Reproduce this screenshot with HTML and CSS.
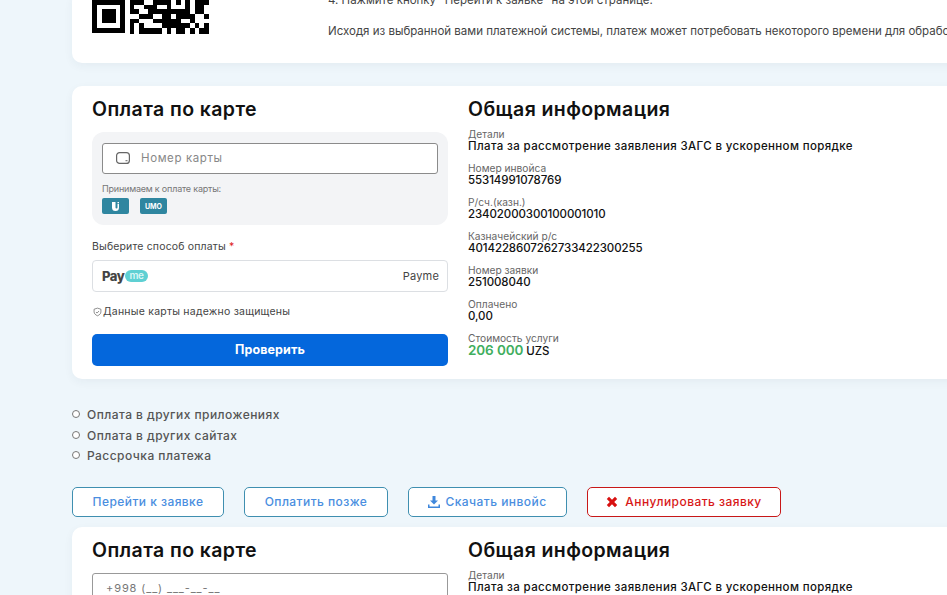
FILE: index.html
```html
<!DOCTYPE html>
<html lang="ru">
<head>
  <meta charset="UTF-8" />
  <meta name="viewport" content="width=device-width, initial-scale=1.0" />
  <title>Оплата</title>
  <link rel="stylesheet" href="styles.css">
</head>
<body>
  <div class="page">
    <div class="card qr-card">
      <svg class="qr" viewBox="0 0 25 7.3" shape-rendering="crispEdges">
        <path fill="#000" d="M0 0h7v7h-7zM1 1v5h5v-5zM2 2h3v3h-3z" fill-rule="evenodd"/>
        <path fill="#000" d="M8 0h3v1h-3zM13 0h3v1h-3zM16 0h1v1h-1zM18 0h1v1h-1zM20 0h1v1h-1zM22 0h3v1h-3zM8 1h1v1h-1zM11 1h3v1h-3zM16 1h1v1h-1zM20 1h1v1h-1zM22 1h2v1h-2zM8 2h2v1h-2zM12 2h4v1h-4zM16 2h5v1h-5zM22 2h2v1h-2zM10 3h3v1h-3zM15 3h2v1h-2zM18 3h4v1h-4zM24 3h1v1h-1zM8 4h2v1h-2zM13 4h6v1h-6zM21 4h1v1h-1zM8 5h1v1h-1zM10 5h1v1h-1zM15 5h6v1h-6zM22 5h1v1h-1zM24 5h1v1h-1zM8 6h1v1.3h-1zM10 6h5v1.3h-5zM16 6h1v1.3h-1zM18 6h2v1.3h-2zM21 6h1v1.3h-1zM23 6h2v1.3h-2z"/>
      </svg>
      <div class="steps">
        <p>4. Нажмите кнопку "Перейти к заявке" на этой странице.</p>
        <p>Исходя из выбранной вами платежной системы, платеж может потребовать некоторого времени для обработки.</p>
      </div>
    </div>

    <div class="card pay-card">
      <div class="pay-col">
        <h2 class="card-title">Оплата по карте</h2>
        <div class="card-panel">
          <div class="card-input">
            <svg class="card-icon" viewBox="0 0 14 12"><rect x="0.6" y="0.6" width="12.8" height="10.8" rx="3" fill="none" stroke="#666" stroke-width="1.2"/><rect x="9.5" y="8.2" width="2" height="1" fill="#666"/></svg>
            <span>Номер карты</span>
          </div>
          <div class="accept-text">Принимаем к оплате карты:</div>
          <div class="badges">
            <span class="badge">
              <svg viewBox="0 0 10 11" width="10" height="11"><path d="M1 1h3.500v5.500a1 1 0 0 0 2 0v-3.500h1.500v3.500a3.500 3.500 0 0 1-7 0z" fill="#fff"/><rect x="6.500" y="1" width="1.500" height="1.300" fill="#fff"/></svg>
            </span>
            <span class="badge badge-text">UMO</span>
          </div>
        </div>
        <div class="field-label">Выберите способ оплаты <span class="req">*</span></div>
        <div class="select">
          <span class="payme-logo">Pay<span class="payme-me">me</span></span>
          <span class="select-name">Payme</span>
        </div>
        <div class="secure">
          <svg viewBox="0 0 10 10" width="9" height="10"><path d="M5 .7l3.8 1.2v3c0 2-1.700 3.400-3.800 4.300-2.100-.9-3.800-2.300-3.800-4.300v-3z" fill="none" stroke="#666" stroke-width=".8"/><path d="M3.300 5l1.200 1.200 2.200-2.300" fill="none" stroke="#666" stroke-width=".8"/></svg>
          Данные карты надежно защищены
        </div>
        <button class="check-button">Проверить</button>
      </div>
      <div class="info-col">
        <h2 class="card-title">Общая информация</h2>
        <div class="info-item"><div class="info-label">Детали</div><div class="info-value">Плата за рассмотрение заявления ЗАГС в ускоренном порядке</div></div>
        <div class="info-item"><div class="info-label">Номер инвойса</div><div class="info-value info-number">55314991078769</div></div>
        <div class="info-item"><div class="info-label">Р/сч.(казн.)</div><div class="info-value info-number">23402000300100001010</div></div>
        <div class="info-item"><div class="info-label">Казначейский р/с</div><div class="info-value info-number">4014228607262733422300255</div></div>
        <div class="info-item"><div class="info-label">Номер заявки</div><div class="info-value info-number">251008040</div></div>
        <div class="info-item"><div class="info-label">Оплачено</div><div class="info-value info-number">0,00</div></div>
        <div class="info-item"><div class="info-label">Стоимость услуги</div><div class="info-value info-number"><span class="price">206 000</span> UZS</div></div>
      </div>
    </div>

    <div class="radios">
      <label class="radio"><span class="radio-dot"></span>Оплата в других приложениях</label>
      <label class="radio"><span class="radio-dot"></span>Оплата в других сайтах</label>
      <label class="radio"><span class="radio-dot"></span>Рассрочка платежа</label>
    </div>

    <div class="actions">
      <button class="action-button btn-go">Перейти к заявке</button>
      <button class="action-button btn-later">Оплатить позже</button>
      <button class="action-button btn-invoice">
        <svg viewBox="0 0 12 12" width="12" height="12"><path d="M4.500 0h3v4.500h2.500l-4 4-4-4h2.500z" fill="#3f87dc"/><path d="M0 8.500h1.500v2h9v-2h1.500v3.500h-12z" fill="#3f87dc"/></svg>
        Скачать инвойс
      </button>
      <button class="action-button btn-cancel">
        <svg viewBox="0 0 12 12" width="12" height="12"><path d="M.8 3l2.200-2.200 3 3 3-3 2.200 2.200-3 3 3 3-2.200 2.200-3-3-3 3-2.200-2.200 3-3z" fill="#d81010"/></svg>
        Аннулировать заявку
      </button>
    </div>

    <div class="card pay-card">
      <div class="pay-col">
        <h2 class="card-title">Оплата по карте</h2>
        <div class="phone-input">+998 (__) ___-__-__</div>
      </div>
      <div class="info-col">
        <h2 class="card-title">Общая информация</h2>
        <div class="info-item"><div class="info-label">Детали</div><div class="info-value">Плата за рассмотрение заявления ЗАГС в ускоренном порядке</div></div>
      </div>
    </div>
  </div>
</body>
</html>
```

FILE: styles.css
```css
* {
  margin: 0;
  padding: 0;
  box-sizing: border-box;
}

html, body {
  height: 100%;
  overflow: hidden;
}

body {
  font-family: Inter, "Noto Sans", sans-serif;
  background: #eef6fb;
  color: #111;
}

.page {
  width: 1120px;
  padding-left: 72px;
  display: flex;
  flex-direction: column;
}

.card {
  background: #fff;
  border-radius: 10px;
  box-shadow: 0 3px 10px rgba(40, 60, 80, 0.05);
}

/* top card, scrolled partly out of view */
.qr-card {
  display: flex;
  margin-top: -8px;
  height: 71px;
  padding-left: 20px;
  gap: 119px;
}

.qr {
  width: 117px;
  height: 34px;
  margin-top: 8px;
  flex: none;
}

.steps {
  font-size: 11.5px;
  color: #444;
  white-space: nowrap;
}

.steps p {
  line-height: 16px;
  margin-bottom: 15px;
}

.pay-card {
  display: flex;
  padding: 0 20px;
  margin-top: 23px;
  height: 293px;
  gap: 20px;
}

.pay-col {
  width: 356px;
  flex: none;
}

.card-title {
  font-size: 19.5px;
  font-weight: 600;
  line-height: 24px;
  letter-spacing: 0.4px;
  margin-top: 11px;
  color: #111;
}

.card-panel {
  background: #f3f4f6;
  border-radius: 12px;
  margin-top: 11px;
  height: 93px;
  padding: 11px 10px;
}

.card-input {
  height: 31px;
  background: #fff;
  border: 1px solid #8b8b8b;
  border-radius: 3px;
  display: flex;
  align-items: center;
  padding: 0 0 1px 13px;
  gap: 11px;
  font-size: 11.5px;
  color: #888;
  letter-spacing: 0.6px;
}

.card-icon {
  width: 14px;
  height: 12px;
}

.accept-text {
  font-size: 9px;
  color: #777;
  margin-top: 9px;
  line-height: 12px;
  letter-spacing: -0.2px;
}

.badges {
  display: flex;
  gap: 11px;
  margin-top: 3px;
}

.badge {
  width: 27px;
  height: 16px;
  background: #2f86a0;
  border-radius: 2px;
  display: flex;
  align-items: center;
  justify-content: center;
}

.badge-text {
  color: #fff;
  font-size: 7px;
  font-weight: 700;
}

.field-label {
  font-size: 10.5px;
  color: #444;
  margin-top: 15px;
  line-height: 13px;
  letter-spacing: 0.15px;
}

.req {
  color: #d22;
}

.select {
  height: 32px;
  border: 1px solid #dcdfe3;
  border-radius: 4px;
  margin-top: 7px;
  display: flex;
  align-items: center;
  justify-content: space-between;
  padding: 0 8px 0 9px;
}

.payme-logo {
  font-size: 13px;
  font-weight: 800;
  color: #444;
  letter-spacing: -0.4px;
  display: flex;
  align-items: center;
}

.payme-me {
  background: #5fd0d3;
  color: #d8f6f6;
  border-radius: 6px;
  font-size: 10px;
  line-height: 11px;
  font-weight: 600;
  padding: 0 4px 1px;
  margin-left: 1px;
}

.select-name {
  font-size: 11px;
  color: #444;
  letter-spacing: 0.2px;
}

.secure {
  display: flex;
  align-items: center;
  gap: 1px;
  font-size: 10.5px;
  color: #444;
  margin-top: 13px;
  line-height: 14px;
  letter-spacing: 0.22px;
  padding-left: 1px;
}

.check-button {
  display: block;
  width: 100%;
  height: 32px;
  margin-top: 15px;
  padding-bottom: 2px;
  background: #0467dc;
  border: none;
  border-radius: 5px;
  color: #fff;
  font-family: inherit;
  font-size: 12.5px;
  font-weight: 700;
  letter-spacing: 0.1px;
}

.info-col {
  flex: 1;
}

.info-col .card-title {
  margin-bottom: 7px;
}

.info-item {
  margin-bottom: 10px;
}

.info-label {
  font-size: 10.2px;
  color: #666;
  line-height: 12px;
}

.info-value {
  font-size: 11.5px;
  font-weight: 500;
  line-height: 12px;
  color: #111;
  white-space: nowrap;
  letter-spacing: 0.37px;
}

.info-number {
  letter-spacing: -0.1px;
}

.price {
  font-size: 13.5px;
  font-weight: 600;
  color: #3fae5e;
}

.radios {
  margin-top: 28px;
  display: flex;
  flex-direction: column;
  gap: 4px;
}

.radio {
  display: flex;
  align-items: center;
  gap: 7px;
  font-size: 12px;
  font-weight: 500;
  color: #555;
  line-height: 16.5px;
  height: 16.5px;
  letter-spacing: 0.45px;
}

.radio-dot {
  width: 8px;
  height: 8px;
  border: 1px solid #777;
  border-radius: 50%;
  background: #fff;
  margin-top: -2px;
}

.actions {
  display: flex;
  gap: 20px;
  margin-top: 22px;
}

.action-button {
  height: 30px;
  background: #fff;
  border: 1px solid #3f8fb0;
  border-radius: 5px;
  color: #4a8ee0;
  font-family: inherit;
  font-size: 12px;
  font-weight: 500;
  letter-spacing: 0.45px;
  display: flex;
  align-items: center;
  justify-content: center;
  gap: 5px;
}

.btn-go {
  width: 152px;
}

.btn-later {
  width: 144px;
}

.btn-invoice {
  width: 159px;
}

.btn-cancel {
  width: 194px;
  border-color: #c81818;
  color: #d81818;
  gap: 7px;
}

.actions + .pay-card {
  margin-top: 10px;
}

.phone-input {
  height: 32px;
  background: #fff;
  border: 1px solid #999;
  border-radius: 3px;
  margin-top: 11px;
  padding: 7px 13px;
  font-size: 11px;
  color: #777;
  letter-spacing: 0.9px;
}
```
